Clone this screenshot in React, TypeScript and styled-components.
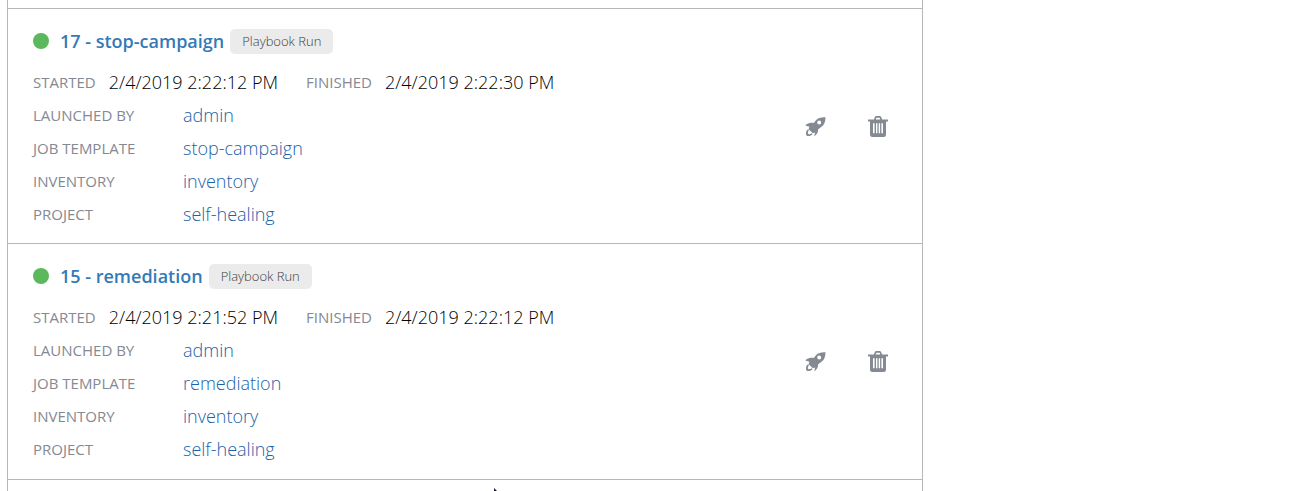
import React from "react";
import styled, { createGlobalStyle } from "styled-components";

const GlobalStyle = createGlobalStyle`
  * { box-sizing: border-box; }
  body { margin: 0; background: #fff; font-family: "Open Sans", sans-serif; color: #000; }
`;

const Viewport = styled.main`
  position: relative;
  display: flex;
  min-height: 100vh;
  padding: 0 7px;
  overflow: hidden;
`;

const JobList = styled.ul`
  list-style: none;
  margin: 0;
  padding: 8px 0 0;
  width: 71.2%;
  border: solid #b7b7b7;
  border-width: 0 1px;
`;

const JobRow = styled.li`
  display: flex;
  align-items: center;
  justify-content: space-between;
  padding: 18px 34px 13px 25px;
  border-top: 1px solid #b7b7b7;

  &:last-child {
    padding-bottom: 14px;
    border-bottom: 1px solid #b7b7b7;
  }
`;

const Details = styled.div`
  display: flex;
  flex-direction: column;
  gap: 10px;
`;

const Header = styled.div`
  display: flex;
  align-items: center;
  height: 28px;
`;

const StatusDot = styled.span`
  width: 16px;
  height: 16px;
  margin-right: 11px;
  border-radius: 50%;
  background: #5cb85c;
`;

const TitleLink = styled.a`
  font-size: 18px;
  font-weight: 600;
  color: #337ab7;
  text-decoration: none;
`;

const Tag = styled.span`
  margin-left: 6px;
  padding: 0 12px;
  border-radius: 5px;
  background: #ebebeb;
  color: #404040;
  font-size: 13px;
  font-weight: 300;
  line-height: 25px;
`;

const Fields = styled.dl`
  margin: 0;
`;

const Times = styled.dl`
  display: flex;
  gap: 28px;
  margin: 0;
`;

const Field = styled.div<{ $inline?: boolean }>`
  display: flex;
  align-items: center;
  height: 33px;

  dt {
    width: ${(p) => (p.$inline ? "auto" : "150px")};
    margin-right: ${(p) => (p.$inline ? "13px" : "0")};
    font-size: 15px;
    color: #848992;
  }

  dd {
    margin: 0;
    font-size: 18px;
    font-weight: 300;
  }
`;

const ValueLink = styled.a`
  color: #1b62a8;
  text-decoration: none;
`;

const Actions = styled.div`
  display: flex;
  align-items: center;
  gap: 42px;
  padding-bottom: 4px;
`;

const IconButton = styled.button`
  display: flex;
  padding: 0;
  border: 0;
  background: none;
  color: #848992;
  cursor: pointer;
`;

const Pointer = styled.svg`
  position: absolute;
  left: 38%;
  bottom: -14px;
`;

const RocketIcon = () => (
  <svg width="21" height="20" viewBox="0 0 21 20" aria-hidden="true">
    <g fill="currentColor">
      <path
        fillRule="evenodd"
        d="M20.500 0.200C16.500-.1 13.300.7 11.200 3L8.700 6.100C5.500 5.300 2.300 6.300.3 8.600L4.400 9.700L3.600 12.200L7.900 16.300L10.200 15.400L9.200 19.300C12 17.500 13.300 15.200 13 12.500L16.800 9.600C19.300 7.500 20.500 4.500 20.500.2ZM14.200 3.600A2 2 0 1 0 14.200 7.600A2 2 0 1 0 14.200 3.600Z"
      />
      <path d="M3 12.300C.8 13.800.6 16.500 1.600 18.700C3.800 19.400 6 18.900 7.500 17L6.500 16.200C5.300 17.300 4.300 17.500 3.200 17C2.700 15.700 3 14.300 4 13.300Z" />
    </g>
  </svg>
);

const TrashIcon = () => (
  <svg width="20" height="21" viewBox="0 0 20 21" aria-hidden="true">
    <path
      fill="currentColor"
      fillRule="evenodd"
      d="M5.800 3.500L7 .8Q7.400 0 8.300 0H11.700Q12.600 0 13 .8L14.200 3.500H20V5.500H18V18.500Q18 21 15.500 21H4.500Q2 21 2 18.500V5.500H0V3.500ZM7.700 3.500H12.300L11.600 1.700H8.400ZM5 7.200V17.300H6.600V7.200ZM8 7.200V17.300H9.400V7.200ZM10.700 7.200V17.300H12.100V7.200ZM13.400 7.200V17.300H15V7.200Z"
    />
  </svg>
);

interface Job {
  id: number;
  name: string;
  started: string;
  finished: string;
}

const jobs: Job[] = [
  { id: 17, name: "stop-campaign", started: "2/4/2019 2:22:12 PM", finished: "2/4/2019 2:22:30 PM" },
  { id: 15, name: "remediation", started: "2/4/2019 2:21:52 PM", finished: "2/4/2019 2:22:12 PM" },
];

const JobItem = ({ job }: { job: Job }) => {
  const times = [
    ["STARTED", job.started],
    ["FINISHED", job.finished],
  ];
  const links = [
    ["LAUNCHED BY", "admin"],
    ["JOB TEMPLATE", job.name],
    ["INVENTORY", "inventory"],
    ["PROJECT", "self-healing"],
  ];
  return (
    <JobRow>
      <Details>
        <Header>
          <StatusDot />
          <TitleLink href="#">{`${job.id} - ${job.name}`}</TitleLink>
          <Tag>Playbook Run</Tag>
        </Header>
        <div>
          <Times>
            {times.map(([label, value]) => (
              <Field key={label} $inline>
                <dt>{label}</dt>
                <dd>{value}</dd>
              </Field>
            ))}
          </Times>
          <Fields>
            {links.map(([label, value]) => (
              <Field key={label}>
                <dt>{label}</dt>
                <dd><ValueLink href="#">{value}</ValueLink></dd>
              </Field>
            ))}
          </Fields>
        </div>
      </Details>
      <Actions>
        <IconButton type="button" aria-label="Relaunch"><RocketIcon /></IconButton>
        <IconButton type="button" aria-label="Delete"><TrashIcon /></IconButton>
      </Actions>
    </JobRow>
  );
};

export default function App() {
  return (
    <>
      <GlobalStyle />
      <Viewport>
        <JobList>
          {jobs.map((job) => <JobItem key={job.id} job={job} />)}
        </JobList>
        <Pointer width="11" height="17" viewBox="0 0 11 17" aria-hidden="true">
          <path d="M0 0L11 11H6.500L9 16L7 17L4.500 12L0 16Z" fill="#14142b" />
        </Pointer>
      </Viewport>
    </>
  );
}
